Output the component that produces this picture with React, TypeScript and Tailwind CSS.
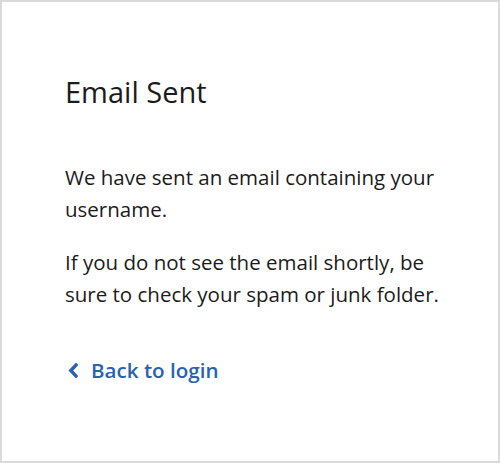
export default function App() {
  return (
    <div
      className="w-[500px] h-[463px] border-2 border-[#dadada] bg-white text-[#1b1b1b]"
      style={{ fontFamily: '"Open Sans", sans-serif' }}
    >
      <div className="pl-[63px] pt-[70px] w-[441px]">
        <h1 className="text-[29px] leading-[40px] font-normal">Email Sent</h1>
        <p className="mt-[49px] text-[20.5px] leading-[32px]">
          We have sent an email containing your username.
        </p>
        <p className="mt-[21px] text-[20.5px] leading-[32px]">
          If you do not see the email shortly, be sure to check your spam or junk folder.
        </p>
        <a href="#" className="mt-[46px] inline-flex items-center gap-[13px] pl-[3px] text-[20.6px] leading-[28px] font-semibold text-[#2862b0]">
          <svg width="10" height="15" viewBox="0 0 10 15" fill="none" stroke="currentColor" strokeWidth="3.4" strokeLinecap="square" strokeLinejoin="miter">
            <path d="M8 2 L2.8 7.5 L8 13" />
          </svg>
          Back to login
        </a>
      </div>
    </div>
  );
}
